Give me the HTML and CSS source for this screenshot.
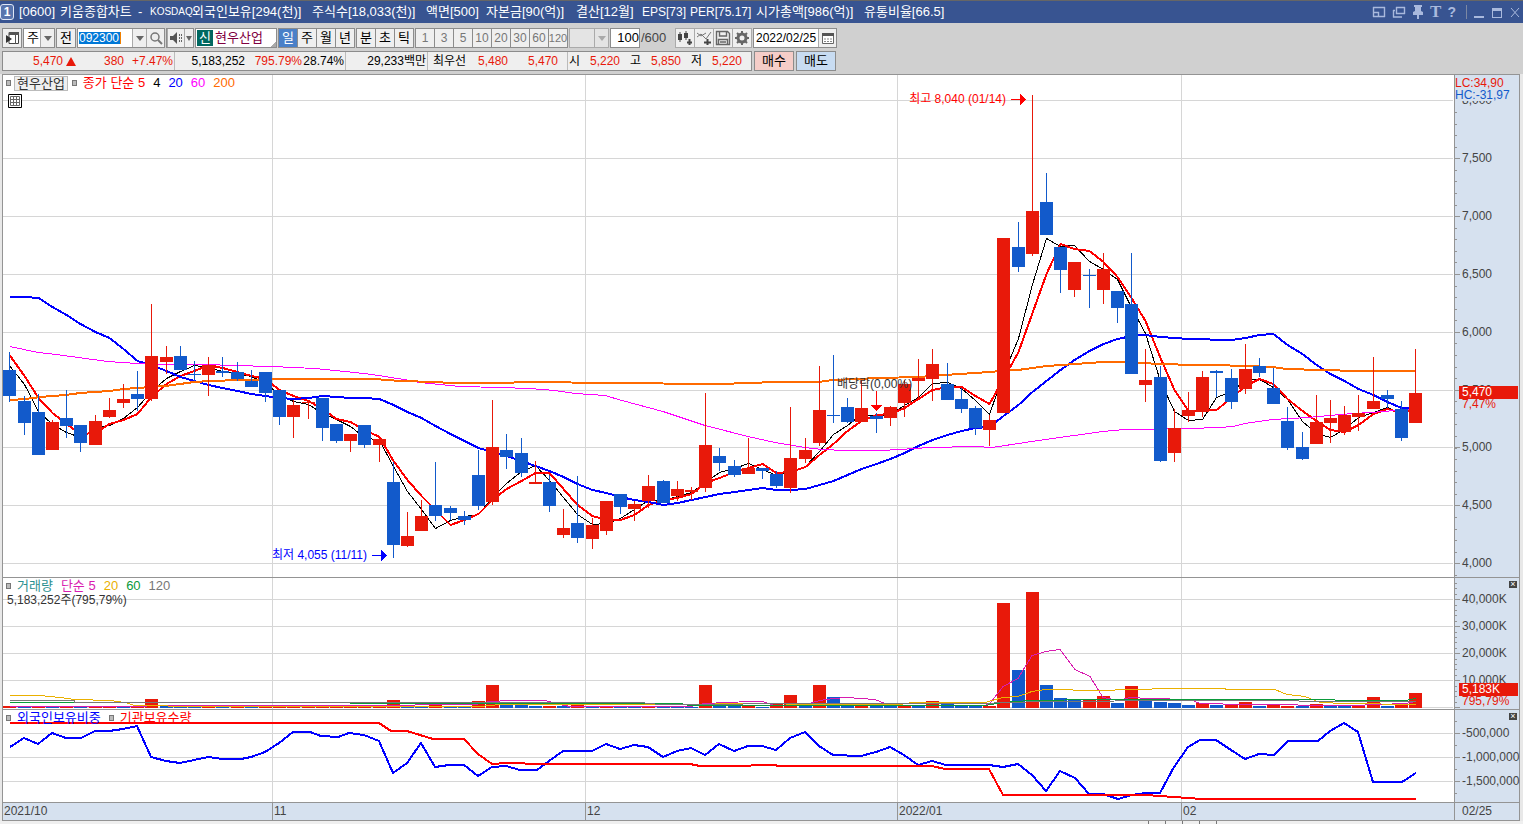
FILE: index.html
```html
<!DOCTYPE html>
<html lang="ko">
<head>
<meta charset="utf-8">
<title>키움종합차트</title>
<link rel="stylesheet" href="styles.css">
</head>
<body>
<header class="titlebar">
  <span class="win-no">1</span>
  <h1 class="title">
    <span>[0600]</span><span>키움종합차트</span><span>-</span><span>KOSDAQ</span><span>외국인보유[294(천)]</span><span>주식수[18,033(천)]</span><span>액면[500]</span><span>자본금[90(억)]</span><span>결산[12월]</span><span>EPS[73]</span><span>PER[75.17]</span><span>시가총액[986(억)]</span><span>유통비율[66.5]</span>
  </h1>
  <nav class="win-tools">
    <button aria-label="배치"><svg width="14" height="14"><path d="M1 2.5h12M1.5 2v10M1 11.5h12M12.5 2v10M1 7.5h5.5v4" fill="none" stroke="currentColor" stroke-width="1.4"/></svg></button>
    <button aria-label="복제"><svg width="14" height="14"><path d="M4 2.5h9M4.500 2v7M4 8.500h9M12.500 2v7M1.500 5v7.500M1 12h9M1 5.500h2" fill="none" stroke="currentColor" stroke-width="1.4"/></svg></button>
    <button aria-label="고정"><svg width="12" height="14"><path d="M2 0h8v2H9v4l2 1v3H7v4H5v-4H1V7l2-1V2H2z" fill="currentColor"/></svg></button>
    <button aria-label="글꼴" class="serif">T</button>
    <button aria-label="도움말" class="mark">?</button>
    <i class="rule"></i>
    <button aria-label="최소화"><svg width="12" height="14"><path d="M1 11h10v2H1z" fill="currentColor"/></svg></button>
    <button aria-label="최대화"><svg width="12" height="14"><path d="M1 3h10v10H1zM2 6v6h8V6z" fill="currentColor" fill-rule="evenodd"/></svg></button>
    <button aria-label="닫기"><svg width="12" height="14"><path d="M2 3l8 9M10 3l-8 9" stroke="currentColor" fill="none"/></svg></button>
  </nav>
</header>

<section class="controls">
  <div class="toolbar">
    <button class="btn" aria-label="메뉴"><svg width="14" height="14"><path d="M4 1.500h9.500v11H4z" fill="#fff" stroke="#444"/><path d="M4 1h10v3H4zM10 4h1v9h-1z" fill="#555"/><path d="M1 4l6 4-6 4z" fill="#333"/></svg></button>
    <div class="box"><select class="w16" aria-label="종류"><option>주</option></select><span class="arrow"></span></div>
    <button class="btn">전</button>
    <div class="box code"><span class="field"><input aria-label="종목코드" value="092300"></span><span class="arrow"></span><button class="cell" aria-label="검색"><svg width="16" height="16"><circle cx="7" cy="7" r="4" fill="#eee" stroke="#777" stroke-width="1.500"/><path d="M10 10l4 4" stroke="#777" stroke-width="2"/></svg></button></div>
    <div class="box sound"><button class="cell" aria-label="소리"><svg width="14" height="14"><path d="M1 5h3l4-4v12L4 9H1z" fill="#555"/><path d="M10 4h1M12 4h1M10 7h1M12 7h1M10 10h1M12 10h1" stroke="#666" stroke-width="2"/></svg></button><span class="arrow slim"></span></div>
    <div class="box name"><b>신</b><span>현우산업</span></div>
    <div class="group"><button class="btn on">일</button><button class="btn">주</button><button class="btn">월</button><button class="btn">년</button></div>
    <div class="group"><button class="btn">분</button><button class="btn">초</button><button class="btn">틱</button></div>
    <div class="group dim"><button class="btn">1</button><button class="btn">3</button><button class="btn">5</button><button class="btn">10</button><button class="btn">20</button><button class="btn">30</button><button class="btn">60</button><button class="btn tight">120</button></div>
    <div class="box off"><select class="w24" aria-label="간격" disabled><option></option></select><span class="arrow"></span></div>
    <div class="box"><input class="count" aria-label="봉 개수" value="100"></div>
    <span class="total">/600</span>
    <div class="group icons">
      <button class="btn" aria-label="차트 추가"><svg width="16" height="16"><path d="M1 4h4v6H1zM2.500 2h1v10h-1zM7 3h4v5H7zM8.500 1h1v9h-1z" fill="#444"/><path d="M12.500 9v6M10 12.500h5" stroke="#444" stroke-width="2"/></svg></button>
      <button class="btn" aria-label="지표 추가"><svg width="16" height="16"><path d="M1 7l4-3 5 5 5-7M1 3l4 3 5-3" fill="none" stroke="#777"/><path d="M11.500 9v6M8 12.500h7" stroke="#444" stroke-width="2"/></svg></button>
      <button class="btn" aria-label="저장"><svg width="16" height="16"><path d="M1.500 1.500h11l2 2v11h-13zM4.500 2v4h7V2M3.500 14V9.500h9V14M5 12h6" fill="none" stroke="#666" stroke-width="1.400"/></svg></button>
      <button class="btn" aria-label="설정"><svg width="16" height="16"><circle cx="8" cy="8" r="4" fill="none" stroke="#666" stroke-width="3"/><path d="M8 1v2M8 13v2M1 8h2M13 8h2M3 3l2 2M11 11l2 2M13 3l-2 2M5 11l-2 2" stroke="#666" stroke-width="2"/></svg></button>
    </div>
    <div class="box date"><input aria-label="날짜" value="2022/02/25"><button class="cell" aria-label="달력"><svg width="14" height="14"><path d="M1.500 2.500h11v10h-11z" fill="#fff" stroke="#666"/><path d="M1 2h12v3H1z" fill="#555"/><path d="M3 8h8M3 10.500h8" stroke="#888" stroke-dasharray="2 1"/></svg></button></div>
  </div>
  <div class="quote">
    <div class="quote-box">
      <div class="q1 up"><span>5,470</span><i class="tri"></i><span>380</span><span>+7.47%</span></div>
      <div class="q2"><span>5,183,252</span><span class="up">795.79%</span><span>28.74%</span></div>
      <div class="q3"><span>29,233백만</span></div>
      <div class="q4"><span>최우선</span><span class="up">5,480</span><span class="up">5,470</span></div>
      <div class="q5"><span>시</span><span class="up">5,220</span><span>고</span><span class="up">5,850</span><span>저</span><span class="up">5,220</span></div>
    </div>
    <button class="order buy">매수</button>
    <button class="order sell">매도</button>
  </div>
</section>

<main class="chart">
  <section class="panel price" id="price">
    <div class="plot">
      <svg class="canvas" preserveAspectRatio="none"></svg>
      <div class="legend"><i class="dot"></i><button class="stock">현우산업</button><i class="dot"></i><span class="c-red name2">종가 단순 5</span><span>4</span><span class="c-blue">20</span><span class="c-pink">60</span><span class="c-orange">200</span></div>
      <button class="grid-btn" aria-label="표"><svg width="14" height="14"><path d="M.5.500h13v13H.500z" fill="#fff" stroke="#000"/><path d="M2.500 2.500h9v9h-9zM2.500 5.500h9M2.500 8.500h9M5.500 3v9M8.500 3v9" fill="none" stroke="#666"/></svg></button>
    </div>
    <div class="axis"><div class="change"><span class="c-lc">LC:34,90</span><span class="c-hc">HC:-31,97</span></div></div>
  </section>
  <section class="panel" id="volume">
    <div class="plot">
      <svg class="canvas" preserveAspectRatio="none"></svg>
      <div class="legend"><i class="dot"></i><span class="c-teal">거래량</span><span class="c-magenta">단순 5</span><span class="c-yellow">20</span><span class="c-green">60</span><span class="c-gray">120</span></div>
      <p class="amount">5,183,252주(795,79%)</p>
    </div>
    <div class="axis"><button class="close" aria-label="닫기">×</button></div>
  </section>
  <section class="panel last" id="holding">
    <div class="plot">
      <svg class="canvas" preserveAspectRatio="none"></svg>
      <div class="legend"><i class="dot"></i><span class="c-blue">외국인보유비중</span><i class="dot"></i><span class="c-red">기관보유수량</span></div>
    </div>
    <div class="axis"><button class="close" aria-label="닫기">×</button></div>
  </section>
  <footer class="dates"><span>2021/10</span><span>11</span><span>12</span><span>2022/01</span><span>02</span><time>02/25</time></footer>
</main>
<div class="strip"><i></i><i></i><i></i><i></i><i></i></div>
<script src="chart.js"></script>
</body>
</html>
```

FILE: styles.css
```css
* { box-sizing: border-box; }
body {
  margin: 0; min-height: 100vh; display: flex; flex-direction: column;
  background: #e8e8e8; color: #000;
  font: 12px/14px "Liberation Sans", "Noto Sans CJK KR", sans-serif;
}
button, input, select { font: inherit; color: inherit; margin: 0; padding: 0; border: 0; border-radius: 0; background: none; }
svg { display: block; flex: none; }

.titlebar { display: flex; align-items: center; height: 23px; background: #385491; border-top: 1px solid #666; color: #fff; }
.win-no { width: 14px; height: 16px; border: 1px solid #dfe6f5; border-radius: 3px; background: #5874ad; font-weight: bold; text-align: center; }
.title {
  flex: 1; margin: 0 0 0 5px; font-size: 13px; font-weight: normal; white-space: nowrap;
  display: grid; grid-template-columns: 41px 78px 12px 42px 120px 114px 60px 90px 66px 48px 66px 108px 90px;
}
.title span:nth-child(4) { font-size: 10px; }
.title span:nth-child(10), .title span:nth-child(11) { font-size: 12px; }
.win-tools { display: flex; align-items: center; gap: 6px; margin-right: 2px; color: #a9b9dd; }
.win-tools .serif { font: bold 17px/16px "Liberation Serif", serif; }
.win-tools .mark { font: bold 14px/16px "Liberation Sans", sans-serif; margin-right: 4px; }
.win-tools .rule { width: 1px; height: 14px; background: #7c88a3; }

.controls { display: flex; flex-direction: column; gap: 3px; padding: 5px 2px 3px; background: #d0d0d0; }
.toolbar { display: flex; align-items: center; gap: 1px; height: 20px; }
.btn, .box { height: 20px; border: 1px solid #8c8c8c; background: #efefef; flex: none; }
.btn { width: 20px; display: inline-flex; align-items: center; justify-content: center; font-size: 13px; }
.btn + .btn { width: 19px; border-left: 0; }
.group { display: flex; flex: none; }
.group .on { background: #4a80c8; color: #fff; }
.dim { color: #777; }
.dim .btn { font-size: 12px; }
.dim .tight { font-size: 11px; }
.box { display: flex; align-items: stretch; background: #fff; }
.box select { appearance: none; opacity: 1; padding-left: 3px; font-size: 13px; }
.w16 { width: 16px; }
.w24 { width: 24px; }
.arrow { width: 14px; background: #efefef; border-left: 1px solid #aaa; display: flex; align-items: center; justify-content: center; }
.arrow::after { content: ""; border: 4px solid transparent; border-top: 5px solid #666; border-bottom: 0; }
.slim { width: 9px; }
.slim::after { border-width: 5px 3px 0; }
.cell { flex: 1; display: flex; align-items: center; justify-content: center; background: #efefef; border-left: 1px solid #aaa; }
.code { width: 88px; }
.field { width: 54px; padding: 3px 1px; }
.field input { display: block; width: 42px; height: 12px; background: #0078d7; color: #fff; border-right: 1px solid #f08000; }
.sound { width: 28px; }
.name { width: 82px; gap: 2px; padding: 1px; align-items: center; color: #800040; font-size: 13px; background: linear-gradient(135deg, transparent 94%, #aaa 94%), #fff; }
.name b { width: 16px; height: 16px; background: #006860; color: #fff; font-weight: normal; text-align: center; line-height: 15px; }
.off, .off .arrow { background: #e4e4e4; border-color: #aaa; }
.off .arrow::after { border-top-color: #aaa; }
.count { width: 28px; text-align: right; font-size: 13px; }
.total { width: 33px; font-size: 13px; color: #444; }
.icons .btn { border-color: #aaa; }
.date { width: 84px; }
.date input { width: 64px; padding-left: 2px; }

.quote { display: flex; gap: 2px; height: 20px; white-space: nowrap; }
.quote-box { display: flex; border: 1px solid #8c8c8c; background: #efefef; width: 750px; }
.quote-box > div { display: grid; align-items: center; text-align: right; border-right: 1px solid #bbb; padding-right: 1px; }
.quote-box > div:last-child { border: 0; }
.q1 { width: 172px; grid-template-columns: 60px 14px 47px 1fr; }
.q2 { width: 171px; grid-template-columns: 70px 57px 1fr; }
.q3 { width: 82px; }
.q4 { width: 140px; grid-template-columns: 38px 42px 50px; }
.q5 { flex: 1; grid-template-columns: 12px 40px 21px 40px 21px 40px; }
.up { color: #e8190a; }
.tri { margin-left: 3px; width: 0; border: 5px solid transparent; border-top: 0; border-bottom: 9px solid #e8190a; }
.order { width: 40px; border: 1px solid #8c8c8c; font-size: 13px; }
.buy { background: #f5cdc8; }
.sell { background: #c8dcf2; }

.chart {
  flex: 1; margin: 0 3px 0 2px; border: 1px solid #949494; background: #fff;
  display: grid; grid-template-rows: 503fr 132fr 92fr 18px;
}
.panel { display: grid; grid-template-columns: 1fr 65px; min-height: 0; border-bottom: 1px solid #949494; }
.last { border-bottom: 0; }
.plot { position: relative; min-width: 0; }
.canvas { position: absolute; inset: 0; width: 100%; height: 100%; }
.canvas * { vector-effect: non-scaling-stroke; shape-rendering: crispEdges; }
.axis { position: relative; background: #d6e1ef; border-left: 1px solid #949494; }
.legend { position: relative; display: flex; align-items: center; gap: 8px; padding: 1px 0 0 3px; white-space: nowrap; height: 15px; font-size: 13px; }
.dot { width: 5px; height: 6px; border: 1px solid #777; background: #bbb; }
.legend .dot + * { margin-left: -2px; }
.legend .dot + .stock { margin-left: -5px; }
.stock { height: 15px; padding: 0 2px; border: 1px solid #bbb; background: #efefef; color: #333; line-height: 13px; }
.stock + .dot { margin-left: -4px; }
.grid-btn { position: relative; display: block; margin: 4px 0 0 5px; }
.amount { position: relative; margin: 0 0 0 4px; color: #333; }
.label { position: absolute; transform: translateY(-50%); left: 7px; color: #444; line-height: 12px; white-space: nowrap; }
.tick { position: absolute; left: 0; width: 2px; height: 1px; background: #949494; }
.major { width: 5px; }
.tag { position: absolute; left: 4px; right: 1px; }
.tag span { display: block; padding-left: 3px; line-height: 13px; height: 13px; background: #e8190a; color: #fff; }
.tag em { display: block; padding-left: 3px; font-style: normal; line-height: 11px; height: 11px; color: #e8190a; background: #d6e1ef; }
.change { position: absolute; z-index: 1; top: 2px; left: 0; right: 0; display: grid; background: #d6e1ef; line-height: 12px; white-space: nowrap; }
.close { position: absolute; z-index: 1; right: 2px; top: 3px; width: 8px; height: 7px; background: #444; color: #fff; font-size: 9px; line-height: 7px; }
.note { position: absolute; transform: translateY(-50%); white-space: nowrap; }
.note.end { transform: translate(-100%, -50%); }

.c-red { color: #f00; } .c-blue { color: #00f; } .c-pink { color: #f0f; } .c-orange { color: #ff6a00; }
.c-teal { color: #2a9090; } .c-magenta { color: #d81cb0; } .c-yellow { color: #eab000; } .c-green { color: #0a9a3a; } .c-gray { color: #777; }
.c-lc { color: #e8190a; } .c-hc { color: #125acb; } .c-dark { color: #333; }

.dates { display: grid; grid-template-columns: 269fr 313fr 312fr 284fr 273fr 65px; border-top: 1px solid #949494; background: #d6e1ef; color: #444; line-height: 16px; }
.dates > * { padding-left: 1px; border-left: 1px solid #949494; }
.dates > :first-child { border: 0; }
.dates time { padding-left: 7px; }
.strip { height: 3px; display: flex; gap: 16px; justify-content: flex-end; padding-right: 306px; background: #efefef; }
.strip i { width: 1px; background: #777; }
```

FILE: chart.js
```js
// Geometry is kept in chart units: one unit per pixel at the default window size.
const X0 = 3, W = 1451, COUNT = 100;
const RED = '#e8190a', BLUE = '#125acb';
const MONTHS = [272, 585, 897, 1181];
const cx = i => Math.floor(9.9 + 14.2 * i);

// direction, body top, body bottom, wick top, wick bottom
const candles = `b370,396,352,402 b401,423,396,435 b412,455,394,455 r422,450,420,450 b418,426,390,438
b425,443,425,452 r421,445,415,445 r410,417,398,418 r399,403,384,408 b394,399,371,411
r356,399,304,401 r357,362,346,374 b356,370,346,370 b374,375,361,381 r365,375,357,396
b371,373,357,377 b372,379,362,381 b381,387,370,387 b372,393,372,402 b390,417,390,425
r405,417,400,438 r402,403,400,419 b398,428,398,441 b424,441,424,443 r434,441,434,452
b425,445,425,448 r439,445,439,462 b482,545,462,558 r536,546,512,547 r516,531,500,531
b505,516,462,521 b508,513,506,520 b516,520,511,525 b475,506,450,510 r447,502,400,505
b450,457,434,469 b453,473,438,477 r482,484,461,484 b482,506,475,512 r528,535,509,538
b523,538,476,543 r525,539,518,549 r501,531,501,535 b494,507,494,514 r504,509,501,521
r486,501,475,508 b481,503,480,503 r489,496,481,501 r490,492,487,500 r445,488,393,492
b456,463,448,471 b466,475,460,477 r468,474,438,474 b468,471,468,479 b474,486,471,488
r458,488,407,493 r450,459,438,463 r410,443,366,446 b415,416,355,423 b407,422,398,423
r408,422,380,422 b416,419,413,433 r407,418,406,426 r384,403,380,417 r378,381,359,399
r364,379,349,401 b384,400,363,400 b399,409,388,413 b408,428,406,435 r420,430,415,446
r238,413,238,413 b247,267,222,272 r211,254,95,256 b202,235,173,235 b247,270,247,293
r262,290,262,297 b275,276,269,308 r269,290,253,304 b291,308,291,323 b304,374,253,374
r380,385,349,402 b377,461,366,462 r428,453,409,462 r410,416,392,422 r377,412,371,417
b371,373,370,397 b378,402,369,409 r369,389,344,394 b366,373,358,377 b388,404,368,404
b421,448,407,450 b447,459,432,460 r422,444,395,444 r418,423,400,443 r415,432,406,435
r413,417,395,431 r401,409,357,409 b395,399,390,408 b409,438,401,441 r393,423,349,423`
  .split(/\s+/).map(s => ({ up: s[0] === 'r', v: s.slice(1).split(',').map(Number) }));

// Volume bar colours, ten sessions per group
const volColors = ('RBRBRBRRBR RBBBRBRBRR RRRRRRRRBB RBBRRBBBRB RBRBBRBBBR BBRBRRBRBB'
  + ' RBBRBRBBBR RBRBBBRRBR BBBBRBRRBR RBRBBRRBRR').replace(/ /g, '');
const volTops = [706,706,706,706,706,706,706,706,706,706,699,706,706,706,705,706,706,706,706,706,706,706,706,706,706,706,706,
  700,706,706,702,706,706,701,685,705,705,706,706,706,705,707,706,707,707,706,707,707,707,685,705,705,705,707,704,695,704,685,697,705,
  705,706,706,705,705,701,704,706,706,706,603,670,592,685,698,700,699,696,703,686,700,702,703,705,703,705,705,702,706,705,
  706,706,704,706,706,706,697,706,705,693];

const closes = candles.map(c => c.up ? c.v[0] : c.v[1]);
function average(n, head) {
  return closes.map((_, i) => {
    const y = i < head.length ? head[i] : closes.slice(i - n + 1, i + 1).reduce((a, b) => a + b) / n;
    return cx(i) + '.5,' + Math.round(y);
  }).join(' ');
}

function panel(id, y0, h, grid, labels, minor) {
  const root = document.getElementById(id);
  const svg = root.querySelector('svg'), axis = root.querySelector('.axis');
  svg.setAttribute('viewBox', `${X0} ${y0} ${W} ${h}`);
  let out = '';
  const put = (el, cls, text, style) => {
    const n = document.createElement('span');
    n.className = cls; n.textContent = text;
    Object.assign(n.style, style); el.append(n);
    return n;
  };
  const top = y => (y - y0) / h * 100 + '%';
  const left = x => (x - X0) / W * 100 + '%';
  grid.forEach((y, i) => {
    out += `<path d="M${X0} ${y}.5H1453" stroke="#d6d6d6"/>`;
    put(axis, 'tick major', '', { top: top(y) });
    if (labels[i]) put(axis, 'label', labels[i], { top: top(y) });
  });
  minor.forEach(y => put(axis, 'tick', '', { top: top(y) }));
  MONTHS.forEach(x => { out += `<path d="M${x}.5 ${y0}V${y0 + h}" stroke="#d6d6d6"/>`; });
  return {
    axis, put, top, left, plot: root.querySelector('.plot'),
    line(points, color, width = 1) {
      const shift = width === 1 ? ' transform="translate(0 .5)"' : '';
      out += `<polyline points="${points}"${shift} fill="none" stroke="${color}" stroke-width="${width}"/>`;
    },
    rect(x, y, w, hh, color) { out += `<rect x="${x}" y="${y}" width="${w}" height="${hh}" fill="${color}"/>`; },
    shape(d, color) { out += `<path d="${d}" fill="${color}"/>`; },
    draw() { svg.innerHTML = out; }
  };
}
const steps = (from, to, by) => { const a = []; for (let y = from; y < to; y += by) a.push(Math.round(y)); return a; };

// Price
const p = panel('price', 75, 502, [100, 158, 216, 274, 332, 390, 447, 505, 563],
  ['8,000', '7,500', '7,000', '6,500', '6,000', '5,500', '5,000', '4,500', '4,000'], steps(112, 577, 11.57));
p.line(average(4, [365, 384, 411]), '#000');
p.line(average(5, [355, 376, 398, 413]), '#f00', 2);
p.line(average(20, [297, 297, 298, 307, 315, 324, 332, 338, 349, 361, 365, 371, 377, 381, 385, 388, 391, 394, 396]), '#00f', 2);
p.line('10,346 38,352 56,354 108,361 137,363 165,364 205,364 234,365 272,366 315,368 345,371 372,374 404,379 420,382 460,386 500,387 530,388 555,390 575,393 605,395 622,400 663,411 705,425 748,436 775,442 805,447 822,449 845,450 880,450 900,449 930,447 975,446 992,447 1045,439 1103,431 1125,429 1190,428 1219,427 1233,426 1245,423 1272,419 1308,417 1340,414 1370,412 1385,411 1402,409 1416,408', '#f0f');
p.line('10,400 26,399 40,397 66,395 80,393 110,391 123,389 151,387 166,386 194,382 210,381 240,380 293,379 375,379 400,381 436,382 450,383 493,383 535,382 606,383 720,384 776,382 818,382 833,380 880,378 918,377 945,375 975,373 1002,371 1018,370 1047,366 1075,364 1103,362 1125,362 1160,364 1195,365 1215,365 1245,366 1272,367 1287,369 1320,370 1360,371 1416,371', '#ff6a00', 2);
candles.forEach((c, i) => {
  const [t, b, hi, lo] = c.v, color = c.up ? RED : BLUE, x = cx(i);
  p.rect(x, hi, 1, lo - hi, color);
  p.rect(x - 6, t, 13, b - t, color);
});
p.rect(1011, 99, 9, 1, '#f00'); p.shape('M1020 94L1026 99.5L1020 105z', '#f00');
p.rect(372, 555, 9, 1, '#00f'); p.shape('M381 550L387 555.5L381 561z', '#00f');
p.rect(876, 391, 1, 15, '#f00'); p.shape('M870.5 405H882.5L876.5 411z', '#f00');
p.draw();
p.put(p.plot, 'note end c-red', '최고 8,040 (01/14)', { left: p.left(1006), top: p.top(99) });
p.put(p.plot, 'note end c-blue', '최저 4,055 (11/11)', { left: p.left(367), top: p.top(555) });
p.put(p.plot, 'note c-dark', '배당락(0,00%)', { left: p.left(837), top: p.top(384) });
function tag(panelRef, y, value, rate) {
  const n = panelRef.put(panelRef.axis, 'tag', '', { top: panelRef.top(y) });
  n.innerHTML = `<span>${value}</span><em>${rate}</em>`;
}
tag(p, 386, '5,470', '7,47%');

// Volume
const v = panel('volume', 578, 131, [599, 626, 653, 680, 707], ['40,000K', '30,000K', '20,000K', '10,000K'], steps(583, 707, 5.4));
for (let i = 0; i < COUNT; i++) {
  v.rect(cx(i) - 6, volTops[i], 13, 708 - volTops[i], volColors[i] === 'R' ? RED : BLUE);
}
v.line('10,706 144,706 150,705 400,705 430,704 475,704 490,701 510,700 545,700 560,704 570,706 690,706 705,703 750,701 762,701 775,705 805,704 820,700 833,698 847,697 875,699 885,703 895,705 985,705 990,703 1003,686 1018,678 1032,655 1046,651 1060,649 1075,669 1090,676 1103,697 1118,700 1130,697 1150,698 1190,699 1200,703 1245,704 1350,705 1380,704 1405,703 1416,701', '#d81cb0');
v.line('10,695 40,695 60,697 75,699 110,700 125,702 135,705 200,706 480,706 500,704 690,704 740,703 830,704 900,704 912,702 985,702 1003,697 1018,696 1032,691 1046,689 1100,690 1130,689 1175,688 1275,689 1287,694 1305,696 1320,702 1345,703 1416,704', '#eab000');
v.line('10,702 680,703 690,705 985,705 1003,702 1030,700 1100,699 1330,699 1340,700 1405,700 1416,698', '#0a9a3a');
v.line('10,700 74,700 75,702 640,702 660,704 830,703 985,703 1003,702 1050,701 1180,700 1416,701', '#777');
v.draw();
tag(v, 683, '5,183K', '795,79%');

// Holdings
const f = panel('holding', 710, 92, [733, 757, 781], ['-500,000', '-1,000,000', '-1,500,000'], [721, 745, 769, 793]);
f.line('10,747 24,738 38,744 52,733 66,738 81,738 95,731 109,731 123,729 137,726 151,757 166,761 180,763 194,760 208,757 223,759 241,759 251,757 265,752 279,743 293,732 310,732 321,736 338,737 349,733 364,735 379,741 393,773 407,763 421,743 435,767 449,765 464,765 478,776 492,767 506,766 520,770 537,770 549,761 563,751 592,751 606,744 620,749 634,745 648,747 663,757 677,751 691,748 705,755 719,744 734,751 748,746 762,746 776,750 790,738 805,732 819,746 833,755 861,756 876,752 890,747 904,755 918,765 932,761 946,765 989,765 1003,767 1018,764 1032,775 1046,791 1060,771 1075,778 1089,794 1103,794 1118,799 1132,795 1146,793 1160,793 1174,767 1188,747 1200,740 1216,740 1231,750 1245,759 1259,754 1274,755 1288,741 1318,741 1330,731 1344,723 1358,732 1373,782 1402,782 1416,773', '#00f', 2);
f.line('10,723 379,723 391,731 407,731 433,739 464,739 478,754 492,764 506,763 520,763 530,764 690,764 700,766 750,766 752,765 775,765 778,766 932,766 945,769 989,769 1003,795 1146,795 1174,797 1202,799 1416,799', '#f00', 2);
f.draw();
```
